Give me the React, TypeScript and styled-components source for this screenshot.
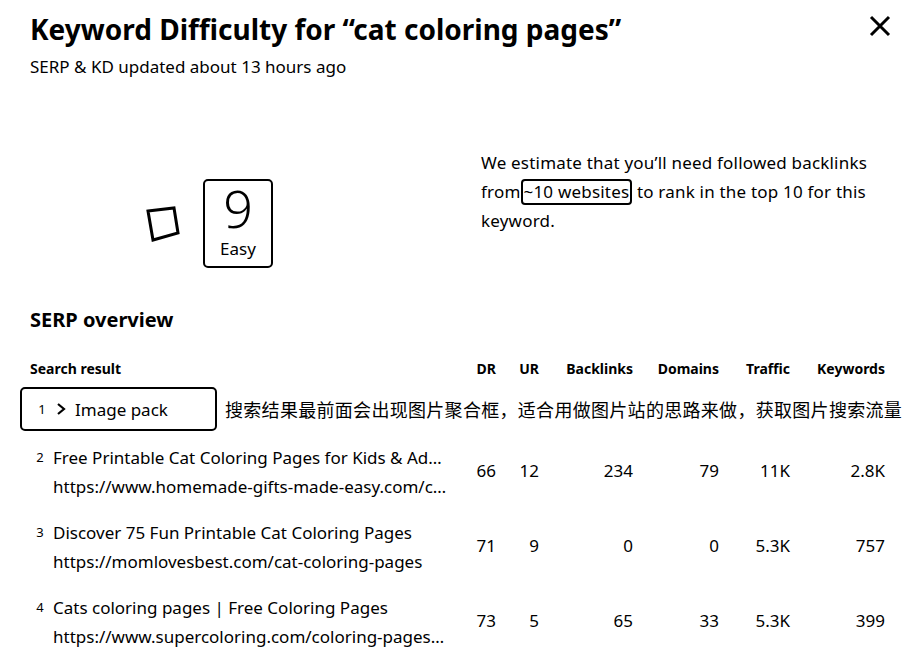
import React from "react";
import styled, { createGlobalStyle } from "styled-components";

const Global = createGlobalStyle`
  html, body { margin: 0; padding: 0; background: #fff; }
  body { font-family: "Noto Sans", "Noto Sans CJK SC", sans-serif; color: #000; }
  * { box-sizing: border-box; }
`;

const Page = styled.div`
  width: 917px;
  height: 660px;
  overflow: hidden;
  padding: 9px 25px 0 30px;
  background: #fff;
`;

const Header = styled.header`
  display: flex;
  justify-content: space-between;
  align-items: flex-start;
`;

const Title = styled.h1`
  margin: 0;
  font-size: 28px;
  line-height: 40px;
  font-weight: 700;
`;

const Close = styled.button`
  border: 0;
  background: none;
  padding: 0;
  margin: 5px 0 0 0;
  width: 24px;
  height: 24px;
  display: flex;
  align-items: center;
  justify-content: center;
  cursor: pointer;
`;

const Sub = styled.p`
  margin: 4px 0 0;
  font-size: 17px;
  line-height: 28px;
`;

const Summary = styled.section`
  display: grid;
  grid-template-columns: 451px 1fr;
  margin-top: 67px;
  height: 157px;
`;

const Gauge = styled.div`
  display: flex;
  align-items: center;
  gap: 23px;
  padding: 31px 0 0 116px;
  align-self: start;
`;

const KdBox = styled.div`
  width: 70px;
  height: 89px;
  border: 2px solid #000;
  border-radius: 5px;
  display: flex;
  flex-direction: column;
  align-items: center;
`;

const KdValue = styled.div`
  font-size: 52px;
  font-weight: 300;
  line-height: 52px;
  margin-top: 1px;
`;

const KdLabel = styled.div`
  font-size: 17px;
  line-height: 22px;
  margin-top: 4px;
`;

const Estimate = styled.p`
  margin: 0;
  font-size: 17px;
  line-height: 29px;
  letter-spacing: 0.2px;
  width: 420px;
`;

const Boxed = styled.span`
  display: inline-block;
  border: 2px solid #000;
  border-radius: 4px;
  padding: 0 1px;
  line-height: 22px;
`;

const SectionTitle = styled.h2`
  margin: 0;
  font-size: 20px;
  line-height: 30px;
  font-weight: 700;
`;

const Table = styled.div`
  margin-top: 24px;
`;

const cols = "426px 40px 43px 94px 86px 71px 95px";

const HeadRow = styled.div`
  display: grid;
  grid-template-columns: ${cols};
  font-size: 14px;
  font-weight: 700;
  line-height: 20px;
`;

const HeadCell = styled.div<{ $num?: boolean }>`
  text-align: ${(p) => (p.$num ? "right" : "left")};
`;

const PackRow = styled.div`
  display: flex;
  align-items: center;
  gap: 8px;
  margin: 8px 0 3px -10px;
`;

const PackBox = styled.div`
  flex: none;
  width: 197px;
  height: 44px;
  border: 2px solid #000;
  border-radius: 5px;
  display: flex;
  align-items: center;
  padding-left: 15px;
  gap: 8px;
  font-size: 17px;
`;

const Rank = styled.span`
  font-size: 13px;
  width: 10px;
  text-align: center;
`;

const Note = styled.span`
  flex: none;
  font-family: "Noto Sans CJK SC", sans-serif;
  font-size: 18px;
  letter-spacing: 0.3px;
  white-space: nowrap;
`;

const Row = styled.div`
  display: grid;
  grid-template-columns: ${cols};
  align-items: center;
  height: 75px;
  font-size: 17px;
`;

const ResultCell = styled.div`
  display: flex;
  align-items: flex-start;
  gap: 8px;
  min-width: 0;
`;

const RankSmall = styled.span`
  font-size: 13px;
  line-height: 29px;
  width: 10px;
  margin-left: 5px;
  text-align: center;
  flex: none;
`;

const ResultText = styled.div`
  min-width: 0;
  width: 394px;
  line-height: 29px;
`;

const Line = styled.div`
  white-space: nowrap;
  overflow: hidden;
  text-overflow: ellipsis;
`;

const Num = styled.div`
  text-align: right;
  margin-top: -2px;
`;

const rows = [
  {
    n: 2,
    title: "Free Printable Cat Coloring Pages for Kids & Adults",
    url: "https://www.homemade-gifts-made-easy.com/cat-coloring-pages.html",
    v: ["66", "12", "234", "79", "11K", "2.8K"],
  },
  {
    n: 3,
    title: "Discover 75 Fun Printable Cat Coloring Pages",
    url: "https://momlovesbest.com/cat-coloring-pages",
    v: ["71", "9", "0", "0", "5.3K", "757"],
  },
  {
    n: 4,
    title: "Cats coloring pages | Free Coloring Pages",
    url: "https://www.supercoloring.com/coloring-pages/animals/cats",
    v: ["73", "5", "65", "33", "5.3K", "399"],
  },
];

export default function App() {
  return (
    <>
      <Global />
      <Page>
        <Header>
          <div>
            <Title>Keyword Difficulty for “cat coloring pages”</Title>
            <Sub>SERP &amp; KD updated about 13 hours ago</Sub>
          </div>
          <Close aria-label="Close">
            <svg width="22" height="22" viewBox="0 0 22 22">
              <path d="M2 2 L20 20 M20 2 L2 20" stroke="#000" strokeWidth="3" strokeLinecap="butt" />
            </svg>
          </Close>
        </Header>

        <Summary>
          <Gauge>
            <svg width="34" height="36" viewBox="0 0 34 36">
              <polygon points="2,5 28,2 32,27 7,34" fill="none" stroke="#000" strokeWidth="3" strokeLinejoin="miter" />
            </svg>
            <KdBox>
              <KdValue>9</KdValue>
              <KdLabel>Easy</KdLabel>
            </KdBox>
          </Gauge>
          <Estimate>
            We estimate that you’ll need followed backlinks from<Boxed>~10 websites</Boxed> to rank in the top 10 for this keyword.
          </Estimate>
        </Summary>

        <SectionTitle>SERP overview</SectionTitle>

        <Table>
          <HeadRow>
            <HeadCell>Search result</HeadCell>
            <HeadCell $num>DR</HeadCell>
            <HeadCell $num>UR</HeadCell>
            <HeadCell $num>Backlinks</HeadCell>
            <HeadCell $num>Domains</HeadCell>
            <HeadCell $num>Traffic</HeadCell>
            <HeadCell $num>Keywords</HeadCell>
          </HeadRow>

          <PackRow>
            <PackBox>
              <Rank>1</Rank>
              <svg width="12" height="14" viewBox="0 0 12 14">
                <path d="M3 2 L9 7 L3 12" fill="none" stroke="#000" strokeWidth="2.2" />
              </svg>
              <span>Image pack</span>
            </PackBox>
            <Note>搜索结果最前面会出现图片聚合框，适合用做图片站的思路来做，获取图片搜索流量</Note>
          </PackRow>

          {rows.map((r) => (
            <Row key={r.n}>
              <ResultCell>
                <RankSmall>{r.n}</RankSmall>
                <ResultText>
                  <Line>{r.title}</Line>
                  <Line>{r.url}</Line>
                </ResultText>
              </ResultCell>
              {r.v.map((x, i) => (
                <Num key={i}>{x}</Num>
              ))}
            </Row>
          ))}
        </Table>
      </Page>
    </>
  );
}
